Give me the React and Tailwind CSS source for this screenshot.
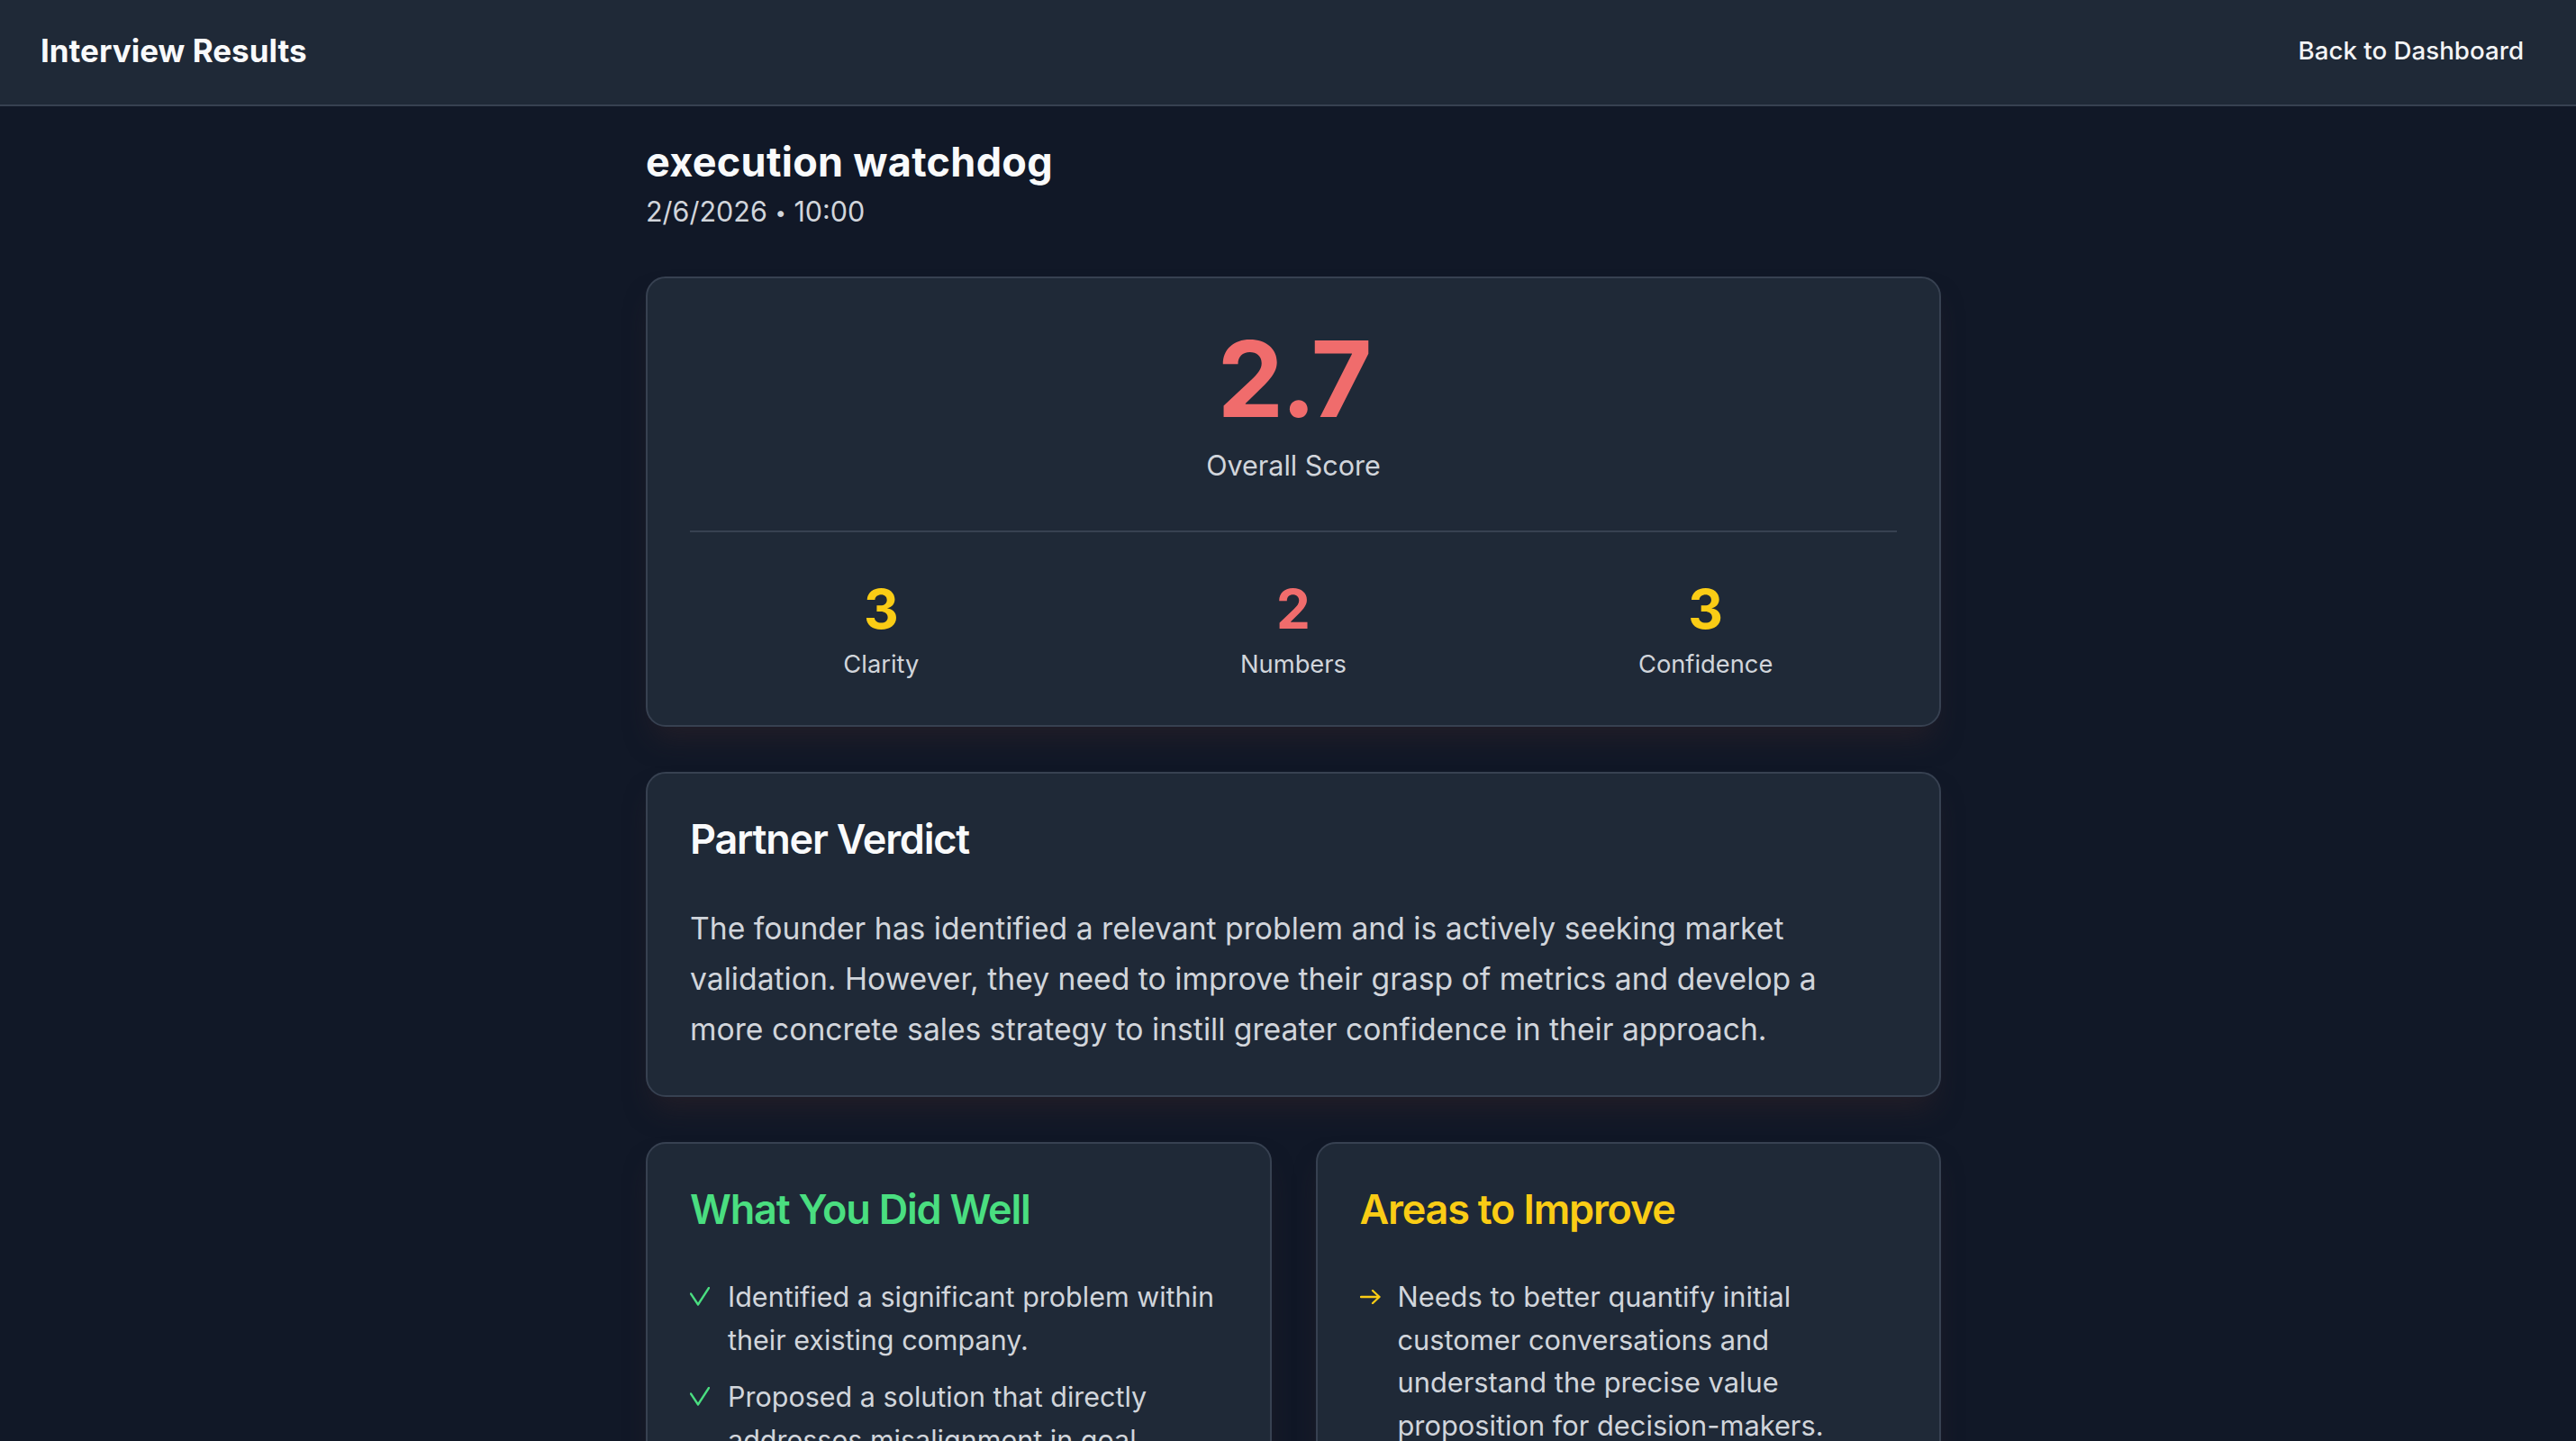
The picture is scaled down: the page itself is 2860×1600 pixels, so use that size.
import React from "react";

const font = { fontFamily: "Inter, 'Noto Sans', 'Liberation Sans', sans-serif" };

function Check() {
  return (
    <svg width="22" height="21" viewBox="0 0 22 21" fill="none" className="block">
      <path d="M1 7.5 L9 19.5 L21 1" stroke="#4ade80" strokeWidth="2.3" strokeLinecap="round" strokeLinejoin="round" />
    </svg>
  );
}

function Arrow() {
  return (
    <svg width="23" height="16" viewBox="0 0 23 16" fill="none" className="block">
      <path d="M1 8 H21.5 M14 1 L21.5 8 L14 15" stroke="#facc15" strokeWidth="2.3" strokeLinecap="round" strokeLinejoin="round" />
    </svg>
  );
}

const cardCls =
  "bg-[#1f2937] border-2 border-[#374151] rounded-[22px] shadow-[0_20px_30px_-8px_rgba(50,35,40,0.55)]";

export default function App() {
  const strengths = [
    "Identified a significant problem within their existing company.",
    "Proposed a solution that directly addresses misalignment in goal setting across teams.",
    "Demonstrated genuine personal experience with the pain point.",
  ];
  const improvements = [
    "Needs to better quantify initial customer conversations and understand the precise value proposition for decision-makers.",
    "Should develop a clearer go-to-market and sales strategy.",
  ];
  return (
    <div className="min-h-screen bg-[#111827] text-gray-100" style={font}>
      <header className="h-[118px] bg-[#1f2937] border-b-2 border-[#374151] flex items-center justify-between pl-[45px] pr-[44px] pb-[4px]">
        <h1 className="text-[35px] leading-[46px] font-bold text-[#f9fafb]">Interview Results</h1>
        <button className="text-[27.7px] leading-[42px] font-medium text-[#f3f4f6] px-[14px]">Back to Dashboard</button>
      </header>

      <div className="flex justify-center pl-[12px]">
        <main className="w-[1438px] pt-[33px] pb-[80px]">
          <h2 className="text-[45px] leading-[57px] font-bold text-[#f9fafb] tracking-[0.3px]">execution watchdog</h2>
          <p className="text-[30.5px] leading-[50px] mt-[2px] text-[#d1d5db]">
            2/6/2026 <span className="text-[22px] align-[2px]">•</span> 10:00
          </p>

          <section className={`${cardCls} mt-[46px] pt-[53px] px-[47px] pb-[45px]`}>
            <div className="text-center">
              <div className="text-[117px] leading-none font-bold text-[#f06c6c] tracking-[-3px]">2.7</div>
              <div className="text-[30.5px] leading-[50px] mt-[13px] text-[#d1d5db]">Overall Score</div>
            </div>
            <div className="border-t-2 border-[#374151] mt-[47px] pt-[55px] grid grid-cols-3 gap-[33px] text-center">
              {[
                ["3", "Clarity", "text-[#facc15]"],
                ["2", "Numbers", "text-[#f06c6c]"],
                ["3", "Confidence", "text-[#facc15]"],
              ].map(([v, l, c]) => (
                <div key={l}>
                  <div className={`text-[60px] leading-none font-bold ${c}`}>{v}</div>
                  <div className="text-[27.3px] leading-[44px] mt-[10px] text-[#d1d5db]">{l}</div>
                </div>
              ))}
            </div>
          </section>

          <section className={`${cardCls} mt-[50px] pt-[43px] px-[47px] pb-[45px]`}>
            <h3 className="text-[45px] leading-[60px] font-semibold text-[#f9fafb] tracking-[-1.2px]">Partner Verdict</h3>
            <p className="text-[33.7px] leading-[56px] mt-[41px] text-[#d1d5db] pr-[30px]">
              The founder has identified a relevant problem and is actively seeking market validation. However, they need to improve their grasp of metrics and develop a more concrete sales strategy to instill greater confidence in their approach.
            </p>
          </section>

          <div className="grid grid-cols-2 gap-[49px] mt-[50px]">
            <section className={`${cardCls} pt-[43px] px-[47px] pb-[45px]`}>
              <h3 className="text-[45px] leading-[60px] font-semibold text-[#4ade80] tracking-[-1.2px]">What You Did Well</h3>
              <ul className="mt-[43px] flex flex-col gap-[16px]">
                {strengths.map((s) => (
                  <li key={s} className="flex items-start">
                    <span className="w-[22px] mr-[20px] mt-[13px] shrink-0"><Check /></span>
                    <span className="text-[30.5px] leading-[47.5px] text-[#d1d5db]">{s}</span>
                  </li>
                ))}
              </ul>
            </section>
            <section className={`${cardCls} pt-[43px] px-[47px] pb-[45px]`}>
              <h3 className="text-[45px] leading-[60px] font-semibold text-[#facc15] tracking-[-1.2px]">Areas to Improve</h3>
              <ul className="mt-[43px] flex flex-col gap-[16px]">
                {improvements.map((s) => (
                  <li key={s} className="flex items-start">
                    <span className="w-[23px] mr-[19px] mt-[16px] shrink-0"><Arrow /></span>
                    <span className="text-[30.8px] leading-[47.5px] text-[#d1d5db]">{s}</span>
                  </li>
                ))}
              </ul>
            </section>
          </div>
        </main>
      </div>
    </div>
  );
}
